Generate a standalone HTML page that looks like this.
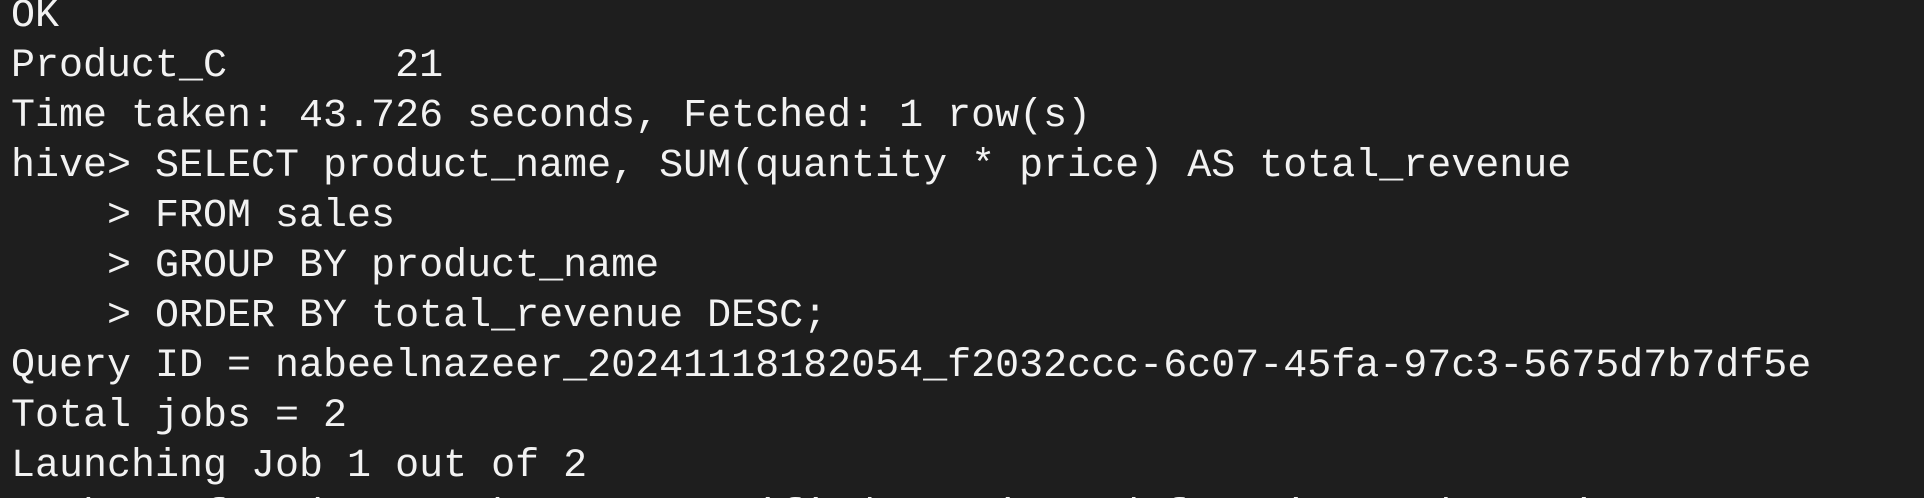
<!DOCTYPE html>
<html><head><meta charset="utf-8"><style>
html,body{margin:0;padding:0;background:#1e1e1e;width:1924px;height:498px;overflow:hidden}
#w{position:relative;width:1924px;height:498px;overflow:hidden;background:#1e1e1e}
pre{margin:0;position:absolute;left:11px;top:-8px;font-family:"Liberation Mono",monospace;font-size:40px;line-height:50px;color:#f2f2f2}
</style></head><body>
<div id="w"><pre>OK
Product_C       21
Time taken: 43.726 seconds, Fetched: 1 row(s)
hive&gt; SELECT product_name, SUM(quantity * price) AS total_revenue
    &gt; FROM sales
    &gt; GROUP BY product_name
    &gt; ORDER BY total_revenue DESC;
Query ID = nabeelnazeer_20241118182054_f2032ccc-6c07-45fa-97c3-5675d7b7df5e
Total jobs = 2
Launching Job 1 out of 2
Number of reduce tasks not specified. Estimated from input data size: 1</pre></div>
</body></html>
